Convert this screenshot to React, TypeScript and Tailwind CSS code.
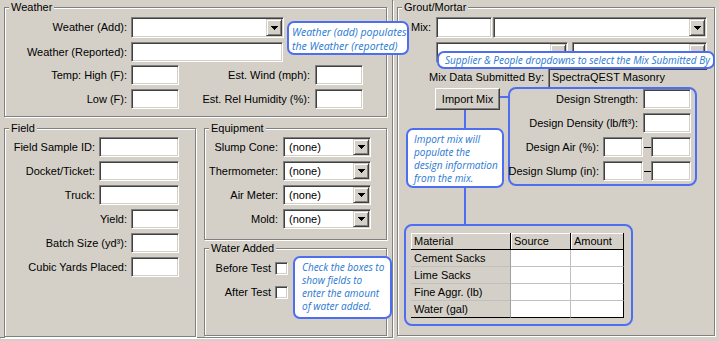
import React from "react";

const sunken =
  "bg-white border border-t-[#808080] border-l-[#808080] border-b-white border-r-white shadow-[inset_1px_1px_0_#404040,inset_-1px_-1px_0_#d4d0c8]";
const btnRaised =
  "bg-[#d4d0c8] border border-t-[#d4d0c8] border-l-[#d4d0c8] border-b-[#404040] border-r-[#404040] shadow-[inset_1px_1px_0_#fff,inset_-1px_-1px_0_#808080]";
const pushBtn =
  "bg-[#d4d0c8] border border-t-white border-l-white border-b-[#404040] border-r-[#404040] shadow-[inset_-1px_-1px_0_#808080]";
const bubble =
  "absolute bg-white border-2 border-[#4e6ef2] rounded-[7px] text-[#2878d2] italic font-['Open_Sans',sans-serif] whitespace-nowrap";

function Group({
  title,
  className,
  children,
}: {
  title: string;
  className: string;
  children?: React.ReactNode;
}) {
  return (
    <div
      className={
        "relative border border-[#808080] shadow-[inset_1px_1px_0_#fff,1px_1px_0_#fff] " +
        className
      }
    >
      <span className="absolute left-[4px] top-[-7px] px-[2px] bg-[#d4d0c8] leading-[13px] whitespace-nowrap">
        {title}
      </span>
      {children}
    </div>
  );
}

function Arrow() {
  return (
    <svg width="7" height="4" viewBox="0 0 7 4" shapeRendering="crispEdges">
      <path d="M0 0h7v1H0zM1 1h5v1H1zM2 2h3v1H2zM3 3h1v1H3z" fill="#000" />
    </svg>
  );
}

function Combo({ className, text }: { className: string; text?: string }) {
  return (
    <div className={sunken + " flex shrink-0 p-px " + className}>
      <div className="flex-1 flex items-center pl-[4px] overflow-hidden whitespace-nowrap">
        {text}
      </div>
      <div className={btnRaised + " w-[16px] h-full flex items-center justify-center"}>
        <Arrow />
      </div>
    </div>
  );
}

function Box({ className }: { className: string }) {
  return <div className={sunken + " shrink-0 " + className} />;
}

function Check() {
  return <div className={sunken + " w-[13px] h-[13px]"} />;
}

function Lbl({ className, children }: { className?: string; children: React.ReactNode }) {
  return <div className={"whitespace-nowrap shrink-0 " + (className ?? "")}>{children}</div>;
}

export default function App() {
  const rows = ["Cement Sacks", "Lime Sacks", "Fine Aggr. (lb)", "Water (gal)"];
  return (
    <div className="relative w-[719px] h-[341px] overflow-hidden bg-[#d4d0c8] text-[11px] leading-[13px] text-black font-['Liberation_Sans',Arial,sans-serif]">
      <div className="flex">
        {/* Left panel */}
        <div className="w-[393px] h-[338px] shrink-0 border-r border-b border-[#808080] shadow-[1px_1px_0_#fff] pl-[4px] pt-[7px]">
          <Group title="Weather" className="w-[383px] h-[110px] pt-[9px]">
            <div className="flex items-center h-[21px]">
              <Lbl className="w-[122px] text-right">Weather (Add):</Lbl>
              <Combo className="ml-[4px] w-[153px] h-[21px]" />
            </div>
            <div className="flex items-center h-[20px] mt-[4px]">
              <Lbl className="w-[122px] text-right">Weather (Reported):</Lbl>
              <Box className="ml-[4px] w-[152px] h-[20px]" />
            </div>
            <div className="flex items-center h-[20px] mt-[3px]">
              <Lbl className="w-[122px] text-right">Temp: High (F):</Lbl>
              <Box className="ml-[4px] w-[48px] h-[20px]" />
              <Lbl className="w-[131px] text-right">Est. Wind (mph):</Lbl>
              <Box className="ml-[5px] w-[48px] h-[20px]" />
            </div>
            <div className="flex items-center h-[20px] mt-[4px]">
              <Lbl className="w-[122px] text-right">Low (F):</Lbl>
              <Box className="ml-[4px] w-[48px] h-[20px]" />
              <Lbl className="w-[131px] text-right">Est. Rel Humidity (%):</Lbl>
              <Box className="ml-[5px] w-[48px] h-[20px]" />
            </div>
          </Group>

          <div className="flex mt-[11px] gap-[8px]">
            <Group title="Field" className="w-[192px] h-[209px] pt-[8px] flex flex-col gap-[4px]">
              {[
                ["Field Sample ID:", true],
                ["Docket/Ticket:", true],
                ["Truck:", true],
                ["Yield:", false],
                ["Batch Size (yd³):", false],
                ["Cubic Yards Placed:", false],
              ].map(([label, wide]) => (
                <div key={label as string} className="flex items-center h-[20px]">
                  {wide ? (
                    <>
                      <Lbl className="w-[90px] text-right">{label}</Lbl>
                      <Box className="ml-[4px] w-[80px] h-[20px]" />
                    </>
                  ) : (
                    <>
                      <Lbl className="w-[122px] text-right">{label}</Lbl>
                      <Box className="ml-[4px] w-[48px] h-[20px]" />
                    </>
                  )}
                </div>
              ))}
            </Group>

            <div className="flex flex-col gap-[8px]">
              <Group title="Equipment" className="w-[183px] h-[112px] pt-[8px] flex flex-col gap-[4px]">
                {["Slump Cone:", "Thermometer:", "Air Meter:", "Mold:"].map((l) => (
                  <div key={l} className="flex items-center h-[20px]">
                    <Lbl className="w-[73px] text-right">{l}</Lbl>
                    <Combo className="ml-[5px] w-[88px] h-[20px]" text="(none)" />
                  </div>
                ))}
              </Group>
              <Group title="Water Added" className="w-[183px] h-[88px] pt-[13px]">
                <div className="flex items-center h-[13px]">
                  <Lbl className="w-[66px] text-right">Before Test</Lbl>
                  <div className="ml-[4px]">
                    <Check />
                  </div>
                </div>
                <div className="flex items-center h-[13px] mt-[11px]">
                  <Lbl className="w-[66px] text-right">After Test</Lbl>
                  <div className="ml-[4px]">
                    <Check />
                  </div>
                </div>
              </Group>
            </div>
          </div>
        </div>

        {/* Right panel */}
        <div className="pl-[4px] pt-[7px]">
          <Group title="Grout/Mortar" className="w-[318px] h-[329px] pt-[9px]">
            <div className="flex items-center h-[21px]">
              <Lbl className="ml-[13px] w-[25px]">Mix:</Lbl>
              <Box className="w-[56px] h-[21px]" />
              <Combo className="ml-[1px] w-[214px] h-[21px]" />
            </div>
            <div className="flex items-center h-[21px] mt-[4px]">
              <Combo className="ml-[38px] w-[132px] h-[21px]" />
              <Combo className="ml-[4px] w-[135px] h-[21px]" />
            </div>
            <div className="flex items-center h-[20px] mt-[4px]">
              <Lbl className="w-[146px] text-right">Mix Data Submitted By:</Lbl>
              <div className="ml-[4px] w-[159px] h-[19px] border-l border-t border-[#808080] shadow-[inset_1px_1px_0_#404040] flex items-center pl-[3px] whitespace-nowrap">
                SpectraQEST Masonry
              </div>
            </div>
            <div className="flex items-start">
              <div className={pushBtn + " ml-[37px] mt-[1px] w-[65px] h-[22px] shrink-0 flex items-center justify-center whitespace-nowrap"}>
                Import Mix
              </div>
              <div className="ml-[8px] w-[189px] h-[99px] shrink-0 rounded-[8px] border-2 border-[#4e6ef2] pr-[4px] flex flex-col gap-[4px]">
                <div className="flex items-center justify-end h-[20px]">
                  <Lbl>Design Strength:</Lbl>
                  <Box className="ml-[5px] w-[48px] h-[20px]" />
                </div>
                <div className="flex items-center justify-end h-[20px]">
                  <Lbl>Design Density (lb/ft³):</Lbl>
                  <Box className="ml-[5px] w-[48px] h-[20px]" />
                </div>
                {["Design Air (%):", "Design Slump (in):"].map((l) => (
                  <div key={l} className="flex items-center justify-end h-[20px]">
                    <Lbl>{l}</Lbl>
                    <Box className="ml-[4px] w-[40px] h-[20px]" />
                    <div className="w-[8px] shrink-0 flex justify-center">
                      <div className="w-[7px] h-px bg-black" />
                    </div>
                    <Box className="w-[40px] h-[20px]" />
                  </div>
                ))}
              </div>
            </div>
            <div className="mt-[38px] ml-[6px] w-[229px] h-[102px] rounded-[8px] border-2 border-[#4e6ef2] pl-[5px] pt-[7px]">
              <div className="w-[213px]">
                <div className="flex h-[17px] border-b border-black">
                  <div className="w-[100px] border-r border-black shadow-[inset_1px_1px_0_#fff] pl-[3px] flex items-center">Material</div>
                  <div className="w-[60px] border-r border-black shadow-[inset_1px_1px_0_#fff] pl-[3px] flex items-center">Source</div>
                  <div className="w-[53px] border-r border-black shadow-[inset_1px_1px_0_#fff] pl-[3px] flex items-center">Amount</div>
                </div>
                {rows.map((r, i) => {
                  const last = i === rows.length - 1;
                  const b = last ? "border-black" : "border-[#c0c0c0]";
                  return (
                    <div key={r} className="flex h-[17px]">
                      <div className={"w-[100px] border-r border-r-[#a0a0a0] border-b pl-[3px] flex items-center whitespace-nowrap " + b}>{r}</div>
                      <div className={"w-[60px] bg-white border-r border-r-[#c0c0c0] border-b " + b} />
                      <div className={"w-[53px] bg-white border-r border-r-black border-b " + b} />
                    </div>
                  );
                })}
              </div>
            </div>
          </Group>
        </div>
      </div>

      {/* connectors */}
      <div className="absolute left-[464px] top-[110px] w-[2px] h-[114px] bg-[#4e6ef2]" />
      <div className="absolute left-[500px] top-[96px] w-[8px] h-[2px] bg-[#4e6ef2]" />

      {/* callouts */}
      <div className={bubble + " left-[287px] top-[21px] w-[122px] h-[34px] pl-[3px] pt-[2px] text-[10.5px] leading-[14px] overflow-hidden"}>
        Weather (add) populates
        <br />
        the Weather (reported)
      </div>
      <div className={bubble + " left-[437px] top-[51px] w-[278px] h-[18px] pl-[6px] text-[10px] leading-[14px]"}>
        Supplier &amp; People dropdowns to select the Mix Submitted By
      </div>
      <div className={bubble + " left-[406px] top-[128px] w-[98px] h-[60px] pl-[6px] pt-[3px] text-[10px] leading-[13px]"}>
        Import mix will
        <br />
        populate the
        <br />
        design information
        <br />
        from the mix.
      </div>
      <div className={bubble + " left-[293px] top-[256px] w-[99px] h-[63px] pl-[7px] pt-[3px] text-[10px] leading-[13px]"}>
        Check the boxes to
        <br />
        show fields to
        <br />
        enter the amount
        <br />
        of water added.
      </div>
    </div>
  );
}
